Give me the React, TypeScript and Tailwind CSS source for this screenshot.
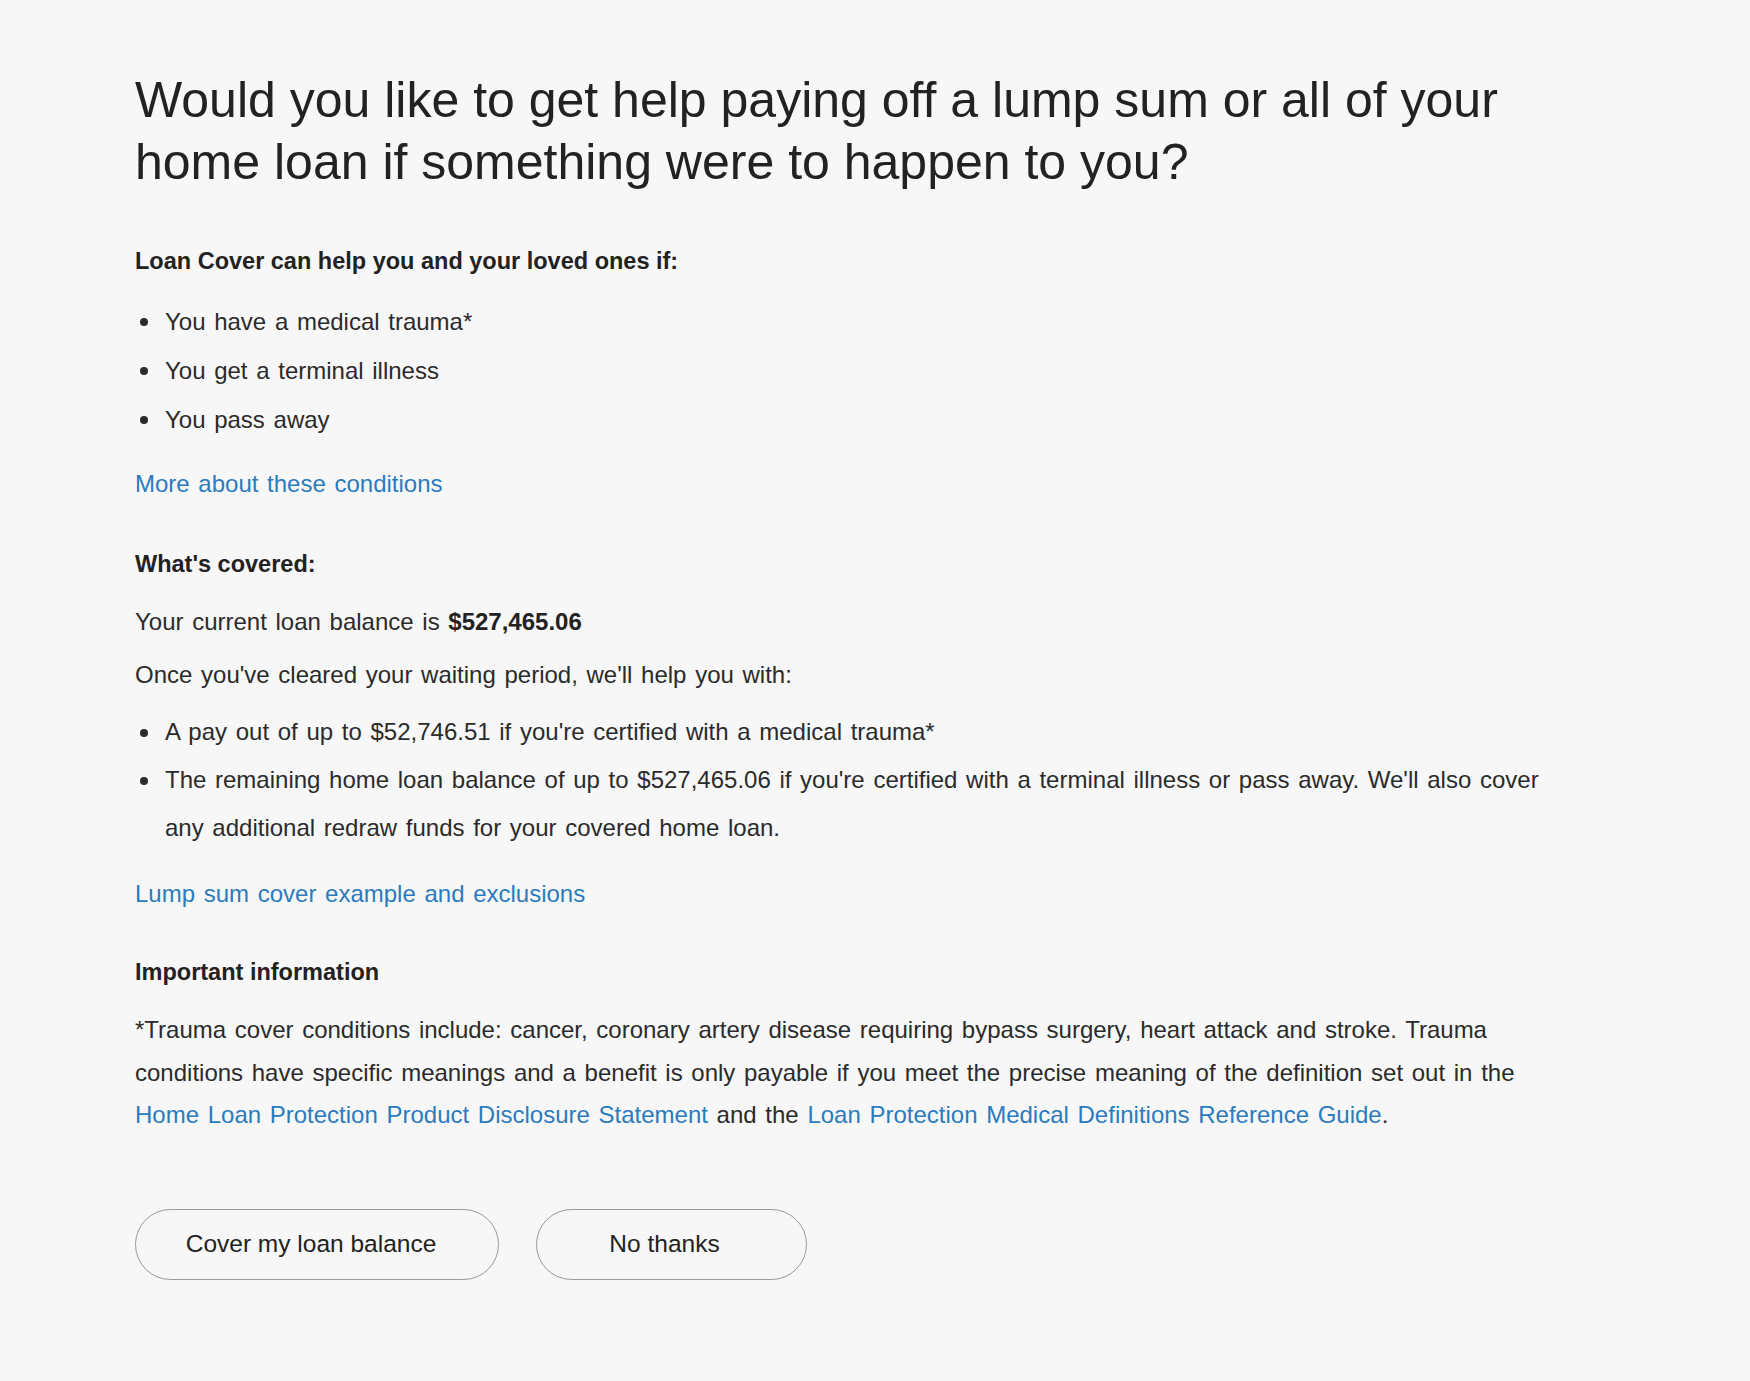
const Bullet = ({ children }: { children: React.ReactNode }) => (
  <li className="flex">
    <span className="w-[30px] shrink-0 flex items-start">
      <span className="mt-[21px] ml-[5px] w-[8px] h-[8px] rounded-full bg-[#2b2b2b]" />
    </span>
    <span>{children}</span>
  </li>
);

const Link = ({ children }: { children: React.ReactNode }) => (
  <a href="#" className="text-[#2b7bbd] hover:underline">
    {children}
  </a>
);

export default function App() {
  return (
    <div
      className="min-h-[1381px] bg-[#f7f7f7] text-[#2b2b2b] pl-[135px] pr-[150px] pt-[69px] [word-spacing:2px]"
      style={{ fontFamily: '"Liberation Sans", Arial, sans-serif' }}
    >
      <h1 className="text-[50px] leading-[62px] text-[#222] max-w-[1400px] [word-spacing:0px]">
        Would you like to get help paying off a lump sum or all of your home loan if something were to happen to you?
      </h1>

      <h3 className="mt-[52px] text-[23.5px] leading-[32px] font-bold text-[#222] [word-spacing:0px]">
        Loan Cover can help you and your loved ones if:
      </h3>
      <ul className="mt-[20px] text-[24px] leading-[49px]">
        <Bullet>You have a medical trauma*</Bullet>
        <Bullet>You get a terminal illness</Bullet>
        <Bullet>You pass away</Bullet>
      </ul>
      <p className="mt-[24px] text-[24px] leading-[32px]">
        <Link>More about these conditions</Link>
      </p>

      <h3 className="mt-[48px] text-[23.5px] leading-[32px] font-bold text-[#222] [word-spacing:0px]">What's covered:</h3>
      <p className="mt-[26px] text-[24px] leading-[32px]">
        Your current loan balance is <strong className="font-bold text-[#222]">$527,465.06</strong>
      </p>
      <p className="mt-[21px] text-[24px] leading-[32px]">
        Once you've cleared your waiting period, we'll help you with:
      </p>
      <ul className="mt-[17px] text-[24px] leading-[48px]">
        <Bullet>A pay out of up to $52,746.51 if you're certified with a medical trauma*</Bullet>
        <Bullet>
          The remaining home loan balance of up to $527,465.06 if you're certified with a terminal illness or pass away.
          We'll also cover
          <br />
          any additional redraw funds for your covered home loan.
        </Bullet>
      </ul>
      <p className="mt-[26px] text-[24px] leading-[32px]">
        <Link>Lump sum cover example and exclusions</Link>
      </p>

      <h3 className="mt-[46px] text-[23.5px] leading-[32px] font-bold text-[#222] [word-spacing:0px]">
        Important information
      </h3>
      <p className="mt-[21px] text-[24px] leading-[42.5px] whitespace-nowrap">
        *Trauma cover conditions include: cancer, coronary artery disease requiring bypass surgery, heart attack and
        stroke. Trauma
        <br />
        conditions have specific meanings and a benefit is only payable if you meet the precise meaning of the definition
        set out in the
        <br />
        <Link>Home Loan Protection Product Disclosure Statement</Link> and the{" "}
        <Link>Loan Protection Medical Definitions Reference Guide</Link>.
      </p>

      <div className="mt-[72px] flex gap-[37px]">
        <button className="h-[71px] w-[364px] rounded-full border border-[#9a9a9a] text-[24.5px] text-[#222] pr-[12px]">
          Cover my loan balance
        </button>
        <button className="h-[71px] w-[271px] rounded-full border border-[#9a9a9a] text-[24.5px] text-[#222] pr-[14px]">
          No thanks
        </button>
      </div>
    </div>
  );
}
